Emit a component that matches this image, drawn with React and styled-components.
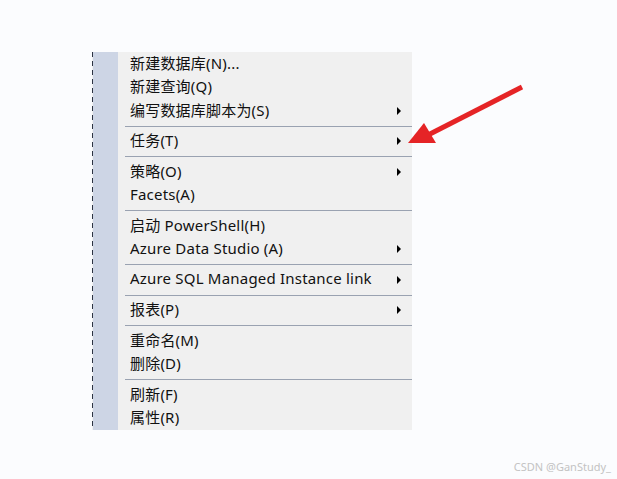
import React from "react";
import styled, { createGlobalStyle } from "styled-components";

const GlobalStyle = createGlobalStyle`
  html, body {
    margin: 0;
    padding: 0;
    background: #fbfcfe;
  }
`;

const Page = styled.div`
  position: relative;
  width: 617px;
  height: 479px;
  overflow: hidden;
  background: #fbfcfe;
  padding: 52px 0 0 92px;
  box-sizing: border-box;
  font-family: "Noto Sans", "Noto Sans CJK SC", sans-serif;
`;

const Menu = styled.div`
  display: flex;
  width: 320px;
  background: #f0f0f0;
`;

// dashed tree line left behind the menu
const Edge = styled.div`
  width: 1px;
  flex-shrink: 0;
  background: repeating-linear-gradient(
    to bottom,
    #2c3342 0 5px,
    transparent 5px 9px
  );
`;

const Gutter = styled.div`
  width: 25px;
  background: #cdd5e5;
  flex-shrink: 0;
`;

const List = styled.div`
  flex: 1;
  display: flex;
  flex-direction: column;
`;

const Item = styled.div`
  display: flex;
  align-items: center;
  justify-content: space-between;
  height: 23.5px;
  box-sizing: border-box;
  padding: 0 11px 3px 12px;
  font-size: 15px;
  letter-spacing: 0.2px;
  color: #111;
  white-space: nowrap;
`;

const SubArrow = styled.span`
  width: 0;
  height: 0;
  margin-top: 3px;
  border-left: 4px solid #000;
  border-top: 4px solid transparent;
  border-bottom: 4px solid transparent;
`;

const Separator = styled.div`
  height: 7px;
  display: flex;
  align-items: center;
  margin-left: 7px;

  &::after {
    content: "";
    flex: 1;
    height: 1px;
    background: #9aa2b1;
  }
`;

const Pointer = styled.svg`
  position: absolute;
  left: 0;
  top: 0;
  pointer-events: none;
`;

const Watermark = styled.div`
  position: absolute;
  right: 6px;
  bottom: 5px;
  font-family: "Noto Sans", sans-serif;
  font-size: 11px;
  color: #c3c3c3;
`;

const groups = [
  [
    { label: "新建数据库(N)..." },
    { label: "新建查询(Q)" },
    { label: "编写数据库脚本为(S)", sub: true },
  ],
  [{ label: "任务(T)", sub: true }],
  [{ label: "策略(O)", sub: true }, { label: "Facets(A)" }],
  [
    { label: "启动 PowerShell(H)" },
    { label: "Azure Data Studio (A)", sub: true },
  ],
  [{ label: "Azure SQL Managed Instance link", sub: true }],
  [{ label: "报表(P)", sub: true }],
  [{ label: "重命名(M)" }, { label: "删除(D)" }],
  [{ label: "刷新(F)" }, { label: "属性(R)" }],
];

export default function App() {
  return (
    <>
      <GlobalStyle />
      <Page>
        <Menu>
          <Edge />
          <Gutter />
          <List>
            {groups.map((group, gi) => (
              <React.Fragment key={gi}>
                {gi > 0 && <Separator />}
                {group.map((it) => (
                  <Item key={it.label}>
                    <span>{it.label}</span>
                    {it.sub && <SubArrow />}
                  </Item>
                ))}
              </React.Fragment>
            ))}
          </List>
        </Menu>

        <Pointer width="617" height="479" viewBox="0 0 617 479">
          <line
            x1="522"
            y1="87"
            x2="428"
            y2="135"
            stroke="#e52426"
            strokeWidth="5"
          />
          <polygon points="408,143 424,123 436,143" fill="#e52426" />
        </Pointer>

        <Watermark>CSDN @GanStudy_</Watermark>
      </Page>
    </>
  );
}
